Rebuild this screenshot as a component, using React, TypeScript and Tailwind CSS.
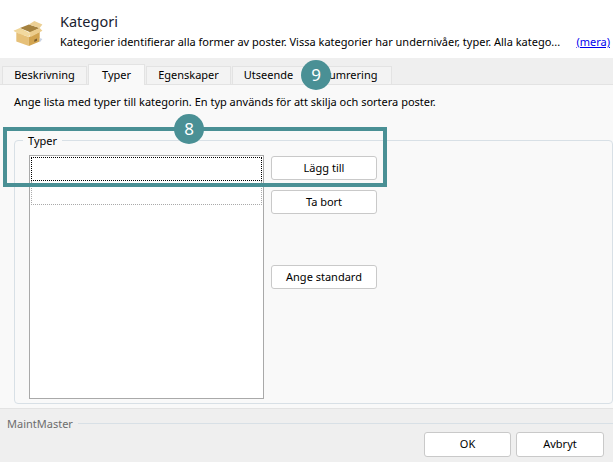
import React from 'react';

const font = { fontFamily: '"Noto Sans", sans-serif' };

const BoxIcon = () => (
    <svg width="32" height="27" viewBox="0 0 34 30" className="shrink-0">
        <path d="M8 9 L18 5 L30 9 L20 14 Z" fill="#a5823f" />
        <path d="M18 5 L24 1 L33 5 L30 9 Z" fill="#ecd095" />
        <path d="M8 9 L1 12 L10 17 L18 14 Z" fill="#f0d596" />
        <path d="M4 14 L18 19 L18 29 L4 24 Z" fill="#e6c078" />
        <path d="M18 19 L30 13 L30 24 L18 29 Z" fill="#d2a450" />
        <path d="M18 14 L30 9 L33 12 L20 19 Z" fill="#eccd8d" />
        <path d="M1 12 L4 14 L18 19 L20 15 L10 11 Z" fill="#f2d99f" />
        <path d="M24 22 L27 20.5 L27 23 L24 24.5 Z" fill="#7a5e2e" />
        <path d="M30 20 L33 21 L30 25 Z" fill="#c9d3e4" />
    </svg>
);

const Tab = ({ label, active, className }: { label: string; active?: boolean; className: string }) => (
    <div
        className={`flex items-center justify-center border border-[#e3e3e3] text-[11px] text-black ${className} ${
            active ? 'relative top-px h-[21px] border-b-0 bg-[#f9f9f9]' : 'h-[18px] border-b-0 bg-[#f3f3f3]'
        }`}
    >
        {label}
    </div>
);

const Btn = ({ label, className }: { label: string; className: string }) => (
    <button className={`rounded-[3px] border border-[#c9c9c9] bg-white text-[11px] text-black ${className}`}>{label}</button>
);

const App: React.FC = () => {
    return (
        <div className="relative flex h-[462px] w-[613px] flex-col overflow-hidden bg-[#f9f9f9]" style={font}>
            <div className="flex h-[58px] bg-white pl-[12px]">
                <div className="pt-[20px]">
                    <BoxIcon />
                </div>
                <div className="ml-[16px] flex-1 pt-[11px]">
                    <div className="text-[14.5px] leading-[20px] text-[#1a2230]">Kategori</div>
                    <div className="mt-[3px] flex items-center pr-[3px] text-[11px] leading-[15px] text-black">
                        <span className="whitespace-nowrap">Kategorier identifierar alla former av poster. Vissa kategorier har undernivåer, typer. Alla katego...</span>
                        <a href="#" className="ml-auto text-[#0000ee] underline">(mera)</a>
                    </div>
                </div>
            </div>

            <div className="flex h-[27px] items-end gap-px border-b border-[#e3e3e3] bg-[#efefef] pl-[2px]">
                <Tab label="Beskrivning" className="w-[85px]" />
                <Tab label="Typer" active className="w-[57px]" />
                <Tab label="Egenskaper" className="w-[85px]" />
                <Tab label="Utseende" className="w-[73px]" />
                <Tab label="Numrering" className="w-[86px]" />
            </div>

            <div className="flex flex-1 flex-col px-[14px] pt-[9px]">
                <p className="text-[11px] leading-[15px] text-black">
                    Ange lista med typer till kategorin. En typ används för att skilja och sortera poster.
                </p>
                <div className="relative mt-[31px] mr-[-14px] h-[264px] rounded-[4px] border border-[#d8e0e6] pl-[14px] pt-[14px]">
                    <span className="absolute left-[8px] top-[-8px] bg-[#f9f9f9] px-[5px] text-[11px] leading-[15px] text-black">Typer</span>
                    <div className="flex gap-[7px]">
                        <div className="h-[244px] w-[235px] border border-[#a9a9a9] bg-white p-[1px]">
                            <div className="h-[24px] border border-dotted border-black" />
                            <div className="h-[24px] border border-t-0 border-dotted border-[#a9a9a9]" />
                        </div>
                        <div className="flex flex-col pt-px">
                            <Btn label="Lägg till" className="h-[24px] w-[106px]" />
                            <Btn label="Ta bort" className="mt-[10px] h-[24px] w-[106px]" />
                            <Btn label="Ange standard" className="mt-[51px] h-[24px] w-[106px]" />
                        </div>
                    </div>
                </div>
            </div>

            <div className="h-[54px] border-t border-[#e3e3e3] bg-[#efefef]">
                <div className="mt-[7px] flex items-center pl-[7px]">
                    <span className="text-[11px] leading-[15px] text-[#6d6d6d]">MaintMaster</span>
                    <div className="ml-[5px] h-px flex-1 bg-[#d8e0e6]" />
                </div>
                <div className="mt-px flex justify-end gap-[5px] pr-[9px]">
                    <Btn label="OK" className="h-[25px] w-[87px]" />
                    <Btn label="Avbryt" className="h-[25px] w-[88px]" />
                </div>
            </div>

            {/* annotation overlay */}
            <div className="absolute left-[3px] top-[127px] h-[60px] w-[384px] border-[4px] border-[#4a9095]" />
            <div className="absolute left-[174px] top-[114px] flex h-[30px] w-[30px] items-center justify-center rounded-full bg-[#4a9095] text-[17px] text-white">8</div>
            <div className="absolute left-[301px] top-[60px] flex h-[30px] w-[30px] items-center justify-center rounded-full bg-[#4a9095] text-[17px] text-white">9</div>
        </div>
    );
};

export default App;
